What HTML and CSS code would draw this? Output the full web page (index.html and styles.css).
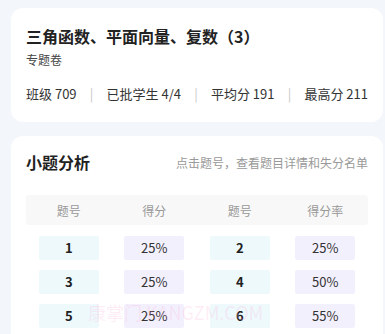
FILE: index.html
```html
<!DOCTYPE html>
<html lang="zh-CN">
<head>
    <meta charset="UTF-8">
    <meta name="viewport" content="width=device-width, initial-scale=1.0">
    <title>小题分析</title>
    <link rel="stylesheet" href="styles.css">
</head>
<body>
    <div class="card summary">
        <h1 class="paper-title">三角函数、平面向量、复数（3）</h1>
        <div class="paper-type">专题卷</div>
        <div class="stats">
            <span>班级 709</span>
            <span class="sep">|</span>
            <span>已批学生 4/4</span>
            <span class="sep">|</span>
            <span>平均分 191</span>
            <span class="sep">|</span>
            <span>最高分 211</span>
        </div>
    </div>

    <div class="card analysis">
        <div class="analysis-head">
            <h2>小题分析</h2>
            <span class="hint">点击题号，查看题目详情和失分名单</span>
        </div>
        <div class="table">
            <div class="table-head">
                <span>题号</span>
                <span>得分</span>
                <span>题号</span>
                <span>得分率</span>
            </div>
            <div class="table-row">
                <span class="cell num">1</span>
                <span class="cell rate">25%</span>
                <span class="cell num">2</span>
                <span class="cell rate">25%</span>
            </div>
            <div class="table-row">
                <span class="cell num">3</span>
                <span class="cell rate">25%</span>
                <span class="cell num">4</span>
                <span class="cell rate">50%</span>
            </div>
            <div class="table-row">
                <span class="cell num">5</span>
                <span class="cell rate">25%</span>
                <span class="cell num">6</span>
                <span class="cell rate">55%</span>
            </div>
        </div>
        <div class="watermark">康掌门 KANGZM.COM</div>
    </div>
</body>
</html>
```

FILE: styles.css
```css
body {
    margin: 0;
    padding: 8px 2px 0 11px;
    background: #f3f6fb;
    font-family: "Noto Sans CJK SC", "Noto Sans", sans-serif;
    color: #333;
    overflow: hidden;
}
.card {
    background: #fff;
    border-radius: 12px;
    padding: 0 15px;
}
.summary {
    padding-top: 15px;
    padding-bottom: 18px;
}
.paper-title {
    margin: 0;
    font-size: 16px;
    line-height: 26px;
    font-weight: bold;
    color: #222;
}
.paper-type {
    margin-top: 2px;
    font-size: 12px;
    line-height: 18px;
    color: #444;
}
.stats {
    margin-top: 15px;
    display: flex;
    justify-content: space-between;
    font-size: 13px;
    line-height: 20px;
    color: #333;
}
.sep {
    color: #c8c8c8;
}
.analysis {
    position: relative;
    margin-top: 14px;
    padding-top: 14px;
    padding-bottom: 20px;
}
.analysis-head {
    display: flex;
    justify-content: space-between;
    align-items: center;
}
.analysis-head h2 {
    margin: 0;
    font-size: 16px;
    line-height: 24px;
    font-weight: bold;
    color: #222;
}
.hint {
    font-size: 12px;
    color: #999;
}
.table {
    margin-top: 21px;
}
.table-head {
    display: grid;
    grid-template-columns: repeat(4, 1fr);
    height: 30px;
    align-items: center;
    background: #f8f8f8;
    border-radius: 3px;
    font-size: 12px;
    color: #999;
    text-align: center;
}
.table-row {
    display: grid;
    grid-template-columns: repeat(4, 1fr);
    justify-items: center;
    margin-top: 10px;
}
.table-head + .table-row {
    margin-top: 11px;
}
.cell {
    width: 60px;
    height: 24px;
    line-height: 24px;
    text-align: center;
    font-size: 13px;
    border-radius: 2px;
}
.num {
    background: #eef9fc;
    font-weight: bold;
    color: #222;
}
.rate {
    background: #f3f0fd;
    color: #333;
}
.watermark {
    position: absolute;
    left: 77px;
    top: 163px;
    font-size: 18px;
    color: rgba(250, 170, 215, 0.22);
    pointer-events: none;
    white-space: nowrap;
}
```
